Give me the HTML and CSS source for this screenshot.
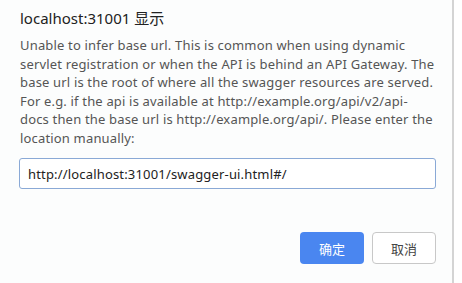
FILE: index.html
```html
<!DOCTYPE html>
<html lang="zh-CN">
    <head>
        <meta charset="utf-8">
        <link rel="stylesheet" href="styles.css">
    </head>
    <body>
    <div class="dialog">
        <h1 class="title">localhost:31001 显示</h1>
        <p class="msg">Unable to infer base url. This is common when using dynamic
servlet registration or when the API is behind an API Gateway. The
base url is the root of where all the swagger resources are served.
For e.g. if the api is available at http://example.org/api/v2/api-
docs then the base url is http://example.org/api/. Please enter the
location manually:</p>
        <input type="text" class="field" value="http://localhost:31001/swagger-ui.html#/">
        <div class="btns">
            <button class="btn ok">确定</button>
            <button class="btn cancel">取消</button>
        </div>
    </div>
    <div class="edge"></div>
    </body>
</html>
```
FILE: styles.css
```css
html,body{
    margin:0;
    padding:0;
    background:#fff;
}
body{
    display:flex;
    width:462px;
    height:283px;
    font-family:"Noto Sans","Noto Sans CJK SC",sans-serif;
}
.dialog{
    width:452px;
    height:283px;
    box-sizing:border-box;
    padding:8px 16px 0 20px;
    background:#fcfdfd;
}
.edge{
    width:2px;
    height:283px;
    background:#d4d4d4;
}
.title{
    margin:0;
    font-size:15px;
    font-weight:normal;
    line-height:20px;
    color:#222;
}
.msg{
    margin:8px 0 0;
    font-size:13px;
    line-height:18.5px;
    letter-spacing:0.17px;
    color:#555;
    white-space:pre-line;
}
.field{
    display:block;
    width:417px;
    height:31px;
    box-sizing:border-box;
    margin:11px 0 0 -1px;
    padding:0 8px;
    border:1px solid #8aa9d6;
    border-radius:3px;
    font:13px "Noto Sans","Noto Sans CJK SC",sans-serif;
    letter-spacing:0.17px;
    color:#222;
    background:#fff;
    outline:none;
}
.btns{
    display:flex;
    justify-content:flex-end;
    gap:8px;
    margin-top:43px;
    width:416px;
}
.btn{
    width:64px;
    height:32px;
    border-radius:4px;
    font:13px "Noto Sans CJK SC",sans-serif;
    padding:0;
}
.ok{
    border:none;
    background:#4a86f0;
    color:#fff;
}
.cancel{
    border:1px solid #c8c8c8;
    background:#fff;
    color:#444;
}
```
